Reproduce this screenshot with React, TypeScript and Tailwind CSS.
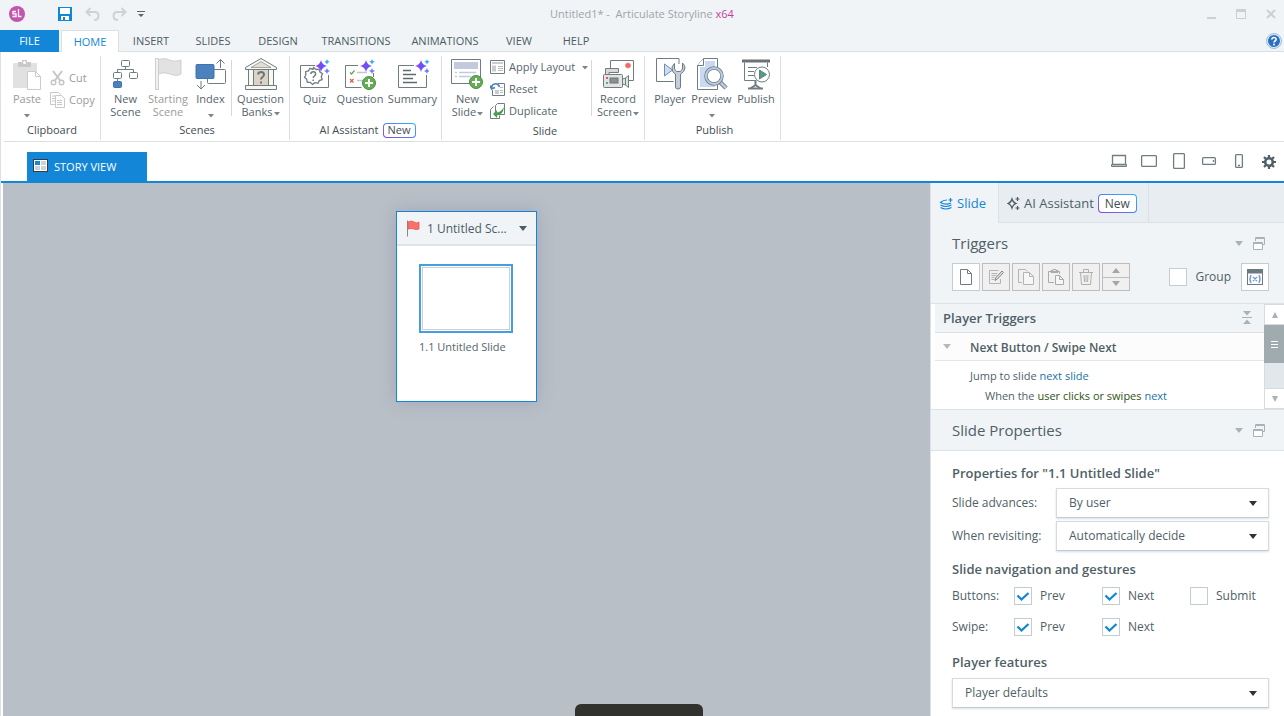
import type { ReactNode } from 'react';

const LINE = '#6f7c80';

function Caret({ className = 'text-[#7b868a]' }: { className?: string }) {
  return (
    <svg width="6" height="4" viewBox="0 0 6 4" className={`inline-block shrink-0 ${className}`}>
      <path d="M0 0h6L3 3.5z" fill="currentColor" />
    </svg>
  );
}

function Sparkles({ x, y }: { x: number; y: number }) {
  return (
    <g transform={`translate(${x} ${y})`}>
      <path d="M0-6Q1-1 6 0Q1 1 0 6Q-1 1-6 0Q-1-1 0-6z" fill="url(#spark)" />
      <path d="M6-7q.4 2.4 2.8 2.8Q6.400-3.800 6-1.400Q5.600-3.800 3.200-4.200Q5.600-4.600 6-7z" fill="#3aa5f5" />
      <path d="M6 2q.4 2.600 3 3Q6.400 5.400 6 8Q5.600 5.400 3 5Q5.600 4.600 6 2z" fill="#6a7bff" />
    </g>
  );
}

function Plus({ x, y }: { x: number; y: number }) {
  return (
    <g transform={`translate(${x} ${y})`}>
      <circle r="6.500" fill="#63ad52" stroke="#4b8f42" />
      <path d="M-4 0h8M0-4v8" stroke="#fff" strokeWidth="2" />
    </g>
  );
}

const icons: Record<string, ReactNode> = {
  paste: (
    <svg width="28" height="36" fill="none">
      <path d="M0 7h24v25H0z" fill="#e1e1e1" />
      <path d="M5 6h4V4h5v2h4v5H5z" fill="#c9c9c9" />
      <circle cx="11.500" cy="6.500" r="1.500" fill="#fff" />
      <path d="M14.500 15.500h8l5 5v13h-13z" fill="#fff" stroke="#cbcbcb" />
      <path d="M22.500 15.500v5h5" stroke="#cbcbcb" />
    </svg>
  ),
  newScene: (
    <svg width="27" height="36" fill="none" stroke={LINE}>
      <rect x="9.500" y="4.500" width="8" height="6" rx="1" />
      <rect x="1.500" y="16.500" width="8" height="6" rx="1" />
      <rect x="17.500" y="16.500" width="8" height="6" rx="1" />
      <path d="M13.500 10.500v3M5.500 16.500v-3h16v3M5.500 22.500v3" />
      <rect x="1.500" y="25.500" width="8" height="6" rx="1" fill="#4b82bd" stroke="#3f75ae" />
    </svg>
  ),
  startingScene: (
    <svg width="27" height="36" fill="none" stroke="#cfcfcf">
      <path d="M3.500 4c4-2 7-1.500 11 0s7 1.500 11.500 0v14c-4 2-7 1.500-11 0s-8-1.500-11.500 0z" fill="#e2e2e2" />
      <rect x=".5" y="2.500" width="3" height="31" fill="#f1f1f1" />
    </svg>
  ),
  index: (
    <svg width="32" height="36" fill="none" stroke={LINE}>
      <rect x="12.500" y="13.500" width="18" height="14" rx="1" />
      <rect x="1" y="8.500" width="18" height="14" rx="1" fill="#4b82bd" stroke="#3f75ae" />
      <path d="M25.500 12V3.500M21.500 7.500l4-4 4 4M6 25v8M2 29l4 4 4-4" />
    </svg>
  ),
  questionBanks: (
    <svg width="32" height="36" fill="none" stroke={LINE}>
      <rect x="8.500" y="14" width="15" height="15.500" fill="#dcd2c6" stroke="none" />
      <path d="M3.500 13.500h5v16h-5zM23.500 13.500h5v16h-5z" fill="#f8f8f2" />
      <path d="M.5 11.500L16 2.500l15.500 9v2H.5z" fill="#f8f8f2" />
      <path d="M6 11.500l10-6 10 6z" fill="#e3ddd2" strokeWidth=".6" />
      <path d="M.5 29.500h31v4H.5z" fill="#f8f8f2" />
      <path d="M13 18.500q.5-2.500 3-2.500 3 0 3 2.500 0 1.500-1.500 2.500-1.500 1-1.500 2.500M16 25.500v2" stroke="#66777d" strokeWidth="2" />
    </svg>
  ),
  quiz: (
    <svg width="32" height="36" fill="none" stroke={LINE}>
      <path d="M16 9.500H1.500v22h28V19" />
      <path d="M14.500 12.500l2.500 2 3-.3 1 2.800 2.500 1.700-1.200 2.800.8 3-2.800 1.100-1.300 2.700-3-.6-2.500 1.700-2.200-2.100-3 0-.6-3-2.200-2 1.400-2.600-.3-3 2.900-.8 1.500-2.600 2.900 1z" strokeWidth="1.300" transform="translate(0 -1)" />
      <path d="M11.800 18q.2-2.200 2.400-2.200 2.400 0 2.400 2.200 0 1.200-1.200 2t-1.200 2M14.200 23.500v1.600" strokeWidth="1.500" />
      <g stroke="none"><Sparkles x={22} y={10} /></g>
    </svg>
  ),
  question: (
    <svg width="34" height="36" fill="none" stroke={LINE}>
      <path d="M15 9.500H2.500v22h16M30.500 17v4" />
      <path d="M7 16.500l1.500 1.500 3-3.500" stroke="#58a84d" strokeWidth="1.200" />
      <path d="M7 23l3.500 3.500M10.500 23L7 26.500" stroke="#e5564c" strokeWidth="1.200" />
      <path d="M14 16.500h10M14 24.500h6" stroke="#bfc5d6" strokeWidth="1.500" />
      <g stroke="none"><Sparkles x={23} y={10} /></g>
      <Plus x={26} y={27} />
    </svg>
  ),
  summary: (
    <svg width="32" height="36" fill="none" stroke={LINE}>
      <path d="M17 9.500H1.500v22h28V19" />
      <path d="M6 14.500h8M6 18.500h13M6 22.500h10M6 26.500h14" strokeWidth="1.500" stroke="#5d6c71" />
      <g stroke="none"><Sparkles x={24} y={10} /></g>
    </svg>
  ),
  newSlide: (
    <svg width="33" height="36" fill="none" stroke={LINE}>
      <path d="M.5 3.500h29v24H.5z" />
      <path d="M3 6h24v7H3z" fill="#c3cade" stroke="none" />
      <path d="M4 16.500h2M8 16.500h17M4 20.500h2M8 20.500h12" stroke="#c3cade" strokeWidth="1.500" />
      <Plus x={25} y={26} />
    </svg>
  ),
  record: (
    <svg width="33" height="36" fill="none" stroke={LINE}>
      <path d="M8.500 12V4.500h23v20h-5" />
      <circle cx="26" cy="9.500" r="2.500" fill="#f4675f" stroke="#f08c80" />
      <path d="M3.500 18v-5.500h13v4H7V18" fill="#d8d8d8" />
      <rect x="1.500" y="18.500" width="19" height="13" rx="1" fill="#e3e3e3" />
      <rect x="8" y="22" width="8" height="5" fill="#87918f" stroke="#6c7775" />
      <path d="M20.500 23l3-1v7l-3-1zM23.500 22l3-2.500v12l-3-2.500" fill="#e3e3e3" />
      <path d="M4 22h2" stroke="#e5564c" strokeWidth="2" />
      <path d="M4 27h2" stroke="#42b883" strokeWidth="2" />
    </svg>
  ),
  player: (
    <svg width="31" height="36" fill="none" stroke={LINE}>
      <path d="M24 8V2.500H1.500v23h17" />
      <path d="M9.500 8v12l8-6z" fill="#cfdcf0" stroke="#6c8fb8" />
      <path d="M19.500 7.500q-4 3-2 7.500 1 2 3 3v13q0 2 2.500 2t2.500-2V18q4-2 4.500-6 0-3-2.500-5v6l-2 2.500h-4l-2-2.500z" fill="#c6cede" />
    </svg>
  ),
  preview: (
    <svg width="32" height="36" fill="none" stroke={LINE}>
      <path d="M7.500 2.500h14v31H1.500v-24z" fill="#fff" />
      <path d="M9 5h10v26H4V11h5z" fill="#c9d9f1" stroke="none" />
      <path d="M7.500 2.500v7h-6" fill="#fff" />
      <path d="M24 26l6 6" strokeWidth="4.500" />
      <path d="M24 26l6 6" stroke="#b9cae4" strokeWidth="2.500" />
      <circle cx="18" cy="20" r="8" fill="#fff" strokeWidth="3.500" />
      <circle cx="18" cy="20" r="8" stroke="#b9cde8" strokeWidth="2" />
    </svg>
  ),
  publish: (
    <svg width="32" height="36" fill="none" stroke={LINE}>
      <path d="M2 5h28" stroke="#6a7377" strokeWidth="3" />
      <path d="M4.500 6.500v18h11M27.500 6.500V11M8 11.500h9M8 15.500h6M8 19.500h6" />
      <path d="M15.500 24v6M15.500 29l-5 3.500M15.500 29l5 3.500" strokeWidth="2" />
      <path d="M8 32.500h15" strokeWidth="2" />
      <circle cx="22" cy="18.500" r="7.500" fill="#fff" />
      <path d="M19.500 14v9l7-4.500z" fill="#4aa08a" />
    </svg>
  ),
};

interface RibbonButtonProps {
  icon: string;
  lines: string[];
  width: string;
  caret?: 'inline' | 'below';
  disabled?: boolean;
}

function RibbonButton({ icon, lines, width, caret, disabled }: RibbonButtonProps) {
  return (
    <button
      disabled={disabled}
      className={`flex flex-col items-center whitespace-nowrap leading-[13px] ${width} ${disabled ? 'text-[#9b9b9b]' : 'text-[#56656b]'}`}
    >
      {icons[icon]}
      {lines.map((line, i) => (
        <span key={line} className="flex items-center gap-px">
          {line}
          {caret === 'inline' && i === lines.length - 1 && <Caret className="mt-1 text-[#7b868a]" />}
        </span>
      ))}
      {caret === 'below' && (
        <span className="flex h-4 items-center pt-1.5">
          <Caret />
        </span>
      )}
    </button>
  );
}

function RibbonGroup({ label, children, className = '' }: { label: ReactNode; children: ReactNode; className?: string }) {
  return (
    <section className={`flex flex-col justify-between border-r border-[#d9dfe2] ${className}`}>
      <div className="flex items-start">{children}</div>
      <div className="flex h-5 items-center justify-center gap-1 text-[#3f4d54]">{label}</div>
    </section>
  );
}

function RibbonDivider() {
  return <div className="mt-1 h-14 w-px shrink-0 bg-[#d3d9dc]" />;
}

function NewBadge({ className }: { className: string }) {
  return (
    <span className="inline-flex rounded bg-linear-to-tr from-[#9333ea] via-[#4f7df5] to-[#22b8f0] p-px">
      <span className={`flex items-center rounded-[3px] bg-white text-[#3f4d54] ${className}`}>New</span>
    </span>
  );
}

function SmallAction({ label, disabled, children }: { label: string; disabled?: boolean; children: ReactNode }) {
  return (
    <button disabled={disabled} className={`flex h-[22px] items-center gap-1 whitespace-nowrap ${disabled ? 'text-[#9b9b9b]' : 'text-[#56656b]'}`}>
      {children}
      {label}
    </button>
  );
}

const tabs = [
  { name: 'INSERT', width: 'w-16' },
  { name: 'SLIDES', width: 'w-[60px]' },
  { name: 'DESIGN', width: 'w-[70px]' },
  { name: 'TRANSITIONS', width: 'w-[86px]' },
  { name: 'ANIMATIONS', width: 'w-[92px]' },
  { name: 'VIEW', width: 'w-14' },
  { name: 'HELP', width: 'w-[58px]' },
];

function TitleBar() {
  return (
    <header className="grid h-[30px] grid-cols-[1fr_auto_1fr] items-center pb-0.5">
      <div className="flex items-center pl-2">
        <svg width="18" height="18" viewBox="0 0 18 18" fill="none">
          <circle cx="9" cy="9" r="8" fill="#c454ae" />
          <path d="M8 6.500H5v2.300h3v2.700H4.500M10.500 4v7.500h3" stroke="#fff" strokeWidth="1.300" />
        </svg>
        <button aria-label="Save" className="ml-8">
          <svg width="14" height="14">
            <path d="M0 0h14v14H0z" fill="#1486d8" />
            <path d="M2 1h10v6H2zM3 9h8v4H3z" fill="#fff" />
            <path d="M5 10h2v3H5z" fill="#1486d8" />
          </svg>
        </button>
        <button aria-label="Undo" className="ml-[13px]">
          <svg width="15" height="14" fill="none" stroke="#cfd2d4" strokeWidth="2">
            <path d="M5.500 1L1.500 5l4 4M2 5h7.500q4 0 4 4t-4.500 4" />
          </svg>
        </button>
        <button aria-label="Redo" className="ml-3">
          <svg width="15" height="14" fill="none" stroke="#cfd2d4" strokeWidth="2">
            <path d="M9.500 1l4 4-4 4M13 5H5.500q-4 0-4 4T6 13" />
          </svg>
        </button>
        <button aria-label="Customize toolbar" className="ml-[10px] text-[#5f6468]">
          <svg width="8" height="6" fill="currentColor">
            <path d="M0 0h8v1H0zM1 3h6L4 6z" />
          </svg>
        </button>
      </div>
      <h1 className="whitespace-pre text-[#a0a4a7]">
        Untitled1* -  Articulate Storyline <span className="text-[#c63d9c]">x64</span>
      </h1>
      <div className="flex items-center justify-end gap-5 pr-2">
        <button aria-label="Minimize">
          <svg width="9" height="10"><path d="M0 8h9v2H0z" fill="#cfcfcf" /></svg>
        </button>
        <button aria-label="Maximize">
          <svg width="10" height="10"><path d="M0 0h10v10H0zM1 3v6h8V3z" fill="#cfcfcf" fillRule="evenodd" /></svg>
        </button>
        <button aria-label="Close">
          <svg width="10" height="10" stroke="#cfcfcf" strokeWidth="2"><path d="M1 1l8 8M9 1L1 9" /></svg>
        </button>
      </div>
    </header>
  );
}

function MenuTabs() {
  return (
    <nav className="flex h-[22px] border-b border-[#dbe0e3] leading-[22px] text-[#4c5c64]">
      <button className="mr-0.5 -mb-px w-[59px] bg-[#1486d8] text-white">FILE</button>
      <button className="-mb-px w-[58px] border border-b-0 border-[#dbe0e3] bg-white text-[#1486d8]">HOME</button>
      {tabs.map((tab) => (
        <button key={tab.name} className={`-mb-px ${tab.width}`}>{tab.name}</button>
      ))}
      <button aria-label="Help" className="mr-0.5 ml-auto">
        <svg width="16" height="16" fill="none">
          <circle cx="8" cy="8" r="7.500" fill="#dce9f6" stroke="#9dbde0" />
          <circle cx="8" cy="8" r="6" fill="#2b6fc0" />
          <path d="M5.800 6.500q.2-2 2.200-2t2.200 1.800q0 1-1.100 1.700T8 9.500M8 10.500v2" stroke="#fff" strokeWidth="1.600" />
        </svg>
      </button>
    </nav>
  );
}

function Ribbon() {
  return (
    <div className="ml-[3px] flex h-[90px] border-b border-[#dbe0e3] pt-1 pb-px">
      <RibbonGroup label="Clipboard" className="w-[97px]">
        <RibbonButton icon="paste" lines={['Paste']} width="w-[46px]" caret="below" disabled />
        <div className="pt-[11px]">
          <SmallAction label="Cut" disabled>
            <svg width="15" height="16" fill="none" stroke="#c6c6c6" strokeWidth="1.500">
              <path d="M3 1l7.500 10M12 1L4.500 11" strokeWidth="2" />
              <circle cx="3.500" cy="12.500" r="2.300" />
              <circle cx="11.500" cy="12.500" r="2.300" />
            </svg>
          </SmallAction>
          <SmallAction label="Copy" disabled>
            <svg width="15" height="16" fill="none" stroke="#c8c8c8">
              <path d="M.5.5h8l2 2v10H.5zM2 4h4M2 6.500h3M2 9h3" />
              <path d="M5.500 3.500h6l3 3v9h-9z" fill="#fff" />
              <path d="M7 8.500h5M7 10.500h5M7 12.500h5" />
            </svg>
          </SmallAction>
        </div>
      </RibbonGroup>

      <RibbonGroup label="Scenes" className="w-[189px] pl-1">
        <RibbonButton icon="newScene" lines={['New', 'Scene']} width="w-[41px]" />
        <RibbonButton icon="startingScene" lines={['Starting', 'Scene']} width="w-[44px]" disabled />
        <RibbonButton icon="index" lines={['Index']} width="w-[41px]" caret="below" />
        <RibbonDivider />
        <RibbonButton icon="questionBanks" lines={['Question', 'Banks']} width="w-[57px]" caret="inline" />
      </RibbonGroup>

      <RibbonGroup
        label={<>AI Assistant <NewBadge className="h-[13px] px-1" /></>}
        className="w-[152px] pl-1"
      >
        <RibbonButton icon="quiz" lines={['Quiz']} width="w-[41px]" />
        <RibbonButton icon="question" lines={['Question']} width="w-[50px]" />
        <RibbonButton icon="summary" lines={['Summary']} width="w-[55px]" />
      </RibbonGroup>

      <RibbonGroup label="Slide" className="w-[203px] pl-1">
        <RibbonButton icon="newSlide" lines={['New', 'Slide']} width="w-[43px]" caret="inline" />
        <div className="w-[102px] pl-px">
          <SmallAction label="Apply Layout">
            <svg width="15" height="14" fill="none" stroke={LINE}>
              <path d="M.5.5h14v13H.5z" />
              <path d="M2 2h11v2H2zM2 5.500h4v6H2z" fill="#c9cdd0" stroke="none" />
              <path d="M8 6.500h5M8 8.500h5M8 10.500h5" stroke="#b5bbbe" />
            </svg>
            <span className="order-last pl-[3px]"><Caret /></span>
          </SmallAction>
          <SmallAction label="Reset">
            <svg width="15" height="14" fill="none" stroke={LINE}>
              <path d="M8 1.500h6.500v12H2.500V8" />
              <path d="M5 8h4v4H5z" fill="#c9cdd0" stroke="none" />
              <path d="M10 5.500h3M10 8.500h3M10 10.500h3" stroke="#b5bbbe" />
              <path d="M9.500 5Q8 1 4.500 2T2 6.500M0 3.500l1.500 3.500L5 5.500" stroke="#4b82bd" strokeWidth="1.600" />
            </svg>
          </SmallAction>
          <SmallAction label="Duplicate">
            <svg width="15" height="16" fill="none" stroke={LINE}>
              <path d="M7.500.5h7v11h-9v-9zM3.500 3.500L.5 6.500v9h9v-3" />
              <path d="M14 4q-1 8-7 8.500v2.500L3 11l4-4v2.500Q11 9 14 4z" fill="#4a9b55" stroke="none" />
            </svg>
          </SmallAction>
        </div>
        <RibbonDivider />
        <RibbonButton icon="record" lines={['Record', 'Screen']} width="w-[52px]" caret="inline" />
      </RibbonGroup>

      <RibbonGroup label="Publish" className="w-[136px] pl-1">
        <RibbonButton icon="player" lines={['Player']} width="w-[42px]" />
        <RibbonButton icon="preview" lines={['Preview']} width="w-[41px]" caret="below" />
        <RibbonButton icon="publish" lines={['Publish']} width="w-[48px]" />
      </RibbonGroup>
    </div>
  );
}

function DeviceButton({ label, children }: { label: string; children: ReactNode }) {
  return (
    <button aria-label={label} className="flex w-[30px] justify-center">
      <svg width="16" height="16" fill="none" stroke="#6f7c80" strokeWidth="1.300">{children}</svg>
    </button>
  );
}

function ViewBar() {
  return (
    <div className="flex h-[41px] items-end border-b-2 border-[#1486d8] pl-[26px]">
      <button className="flex h-[29px] w-[120px] items-center gap-1.5 bg-[#1486d8] pt-px pl-1.5 text-white">
        <svg width="15" height="13" className="mb-1">
          <path d="M0 0h15v13H0z" fill="#333c44" />
          <path d="M1 1h13v11H1z" fill="#fff" />
          <path d="M2 2h5v4H2z" fill="#1486d8" />
          <path d="M8 2h5v4H8zM2 7h5v4H2zM8 7h5v4H8z" fill="#cfd2d4" />
        </svg>
        STORY VIEW
      </button>
      <div className="ml-auto flex h-full items-center pb-px">
        <DeviceButton label="Desktop">
          <path d="M1.500 2.500h13v9h-13z" />
          <path d="M.5 11.500h15v2H.5z" fill="#b9c0c3" strokeWidth="1" />
        </DeviceButton>
        <DeviceButton label="Tablet landscape">
          <rect x=".6" y="2.600" width="14.800" height="10.800" rx="1" />
        </DeviceButton>
        <DeviceButton label="Tablet portrait">
          <rect x="2.600" y=".6" width="10.800" height="14.800" rx="1" />
        </DeviceButton>
        <DeviceButton label="Phone landscape">
          <rect x="1.600" y="4.600" width="12.800" height="6.800" rx="1" />
          <path d="M12.500 7v2" />
        </DeviceButton>
        <DeviceButton label="Phone portrait">
          <rect x="4.600" y="1.600" width="6.800" height="12.800" rx="1" />
          <path d="M7 12.500h2" />
        </DeviceButton>
        <button aria-label="Player settings" className="flex w-[30px] justify-center pt-0.5">
          <svg width="14" height="14" fill="none" stroke="#4f6067">
            <circle cx="7" cy="7" r="3.800" strokeWidth="2.600" />
            <path d="M7 0v3M7 11v3M0 7h3M11 7h3M2 2l2.200 2.200M9.800 9.800L12 12M12 2L9.800 4.200M4.200 9.800L2 12" strokeWidth="2.200" />
          </svg>
        </button>
      </div>
    </div>
  );
}

function StoryCanvas() {
  return (
    <main className="relative ml-0.5 flex-1 overflow-hidden bg-[#b8bfc7]">
      <div className="absolute top-[28px] left-[393px] h-[191px] w-[141px] border border-[#1486d8] bg-white shadow-[0_0_16px_rgba(100,105,140,0.28)]">
        <div className="flex h-[34px] items-center border-b-2 border-[#e0e4e7] bg-[#f0f4f7] px-[9px] text-xs text-[#4c5c64]">
          <svg width="14" height="17" fill="none">
            <path d="M1.500.5v16" stroke="#7d8a90" />
            <path d="M2 2q3-2 6 0t5 0v7q-3 1-5 0T2 9z" fill="#fa7169" stroke="#e9554c" strokeWidth=".8" />
          </svg>
          <span className="flex-1 truncate pt-px pl-[7px]">1 Untitled Sc...</span>
          <button aria-label="Scene menu">
            <svg width="8" height="5"><path d="M0 0h8L4 5z" fill="#4c5c64" /></svg>
          </button>
        </div>
        <div className="pt-[18px] pr-[23px] pl-[22px]">
          <div className="h-[69px] border-2 border-[#43a0e0] p-px">
            <div className="h-full border border-[#cfcfcf]" />
          </div>
          <div className="pt-1.5 leading-4 whitespace-nowrap text-[#56656b]">1.1 Untitled Slide</div>
        </div>
      </div>
      <div className="absolute bottom-0 left-[572px] h-3 w-32 rounded-t-md bg-[#31312e]" />
    </main>
  );
}

function PanelControls() {
  return (
    <div className="flex items-center gap-2.5">
      <button aria-label="Collapse">
        <svg width="8" height="5"><path d="M0 0h8L4 5z" fill="#a9b3b7" /></svg>
      </button>
      <button aria-label="Undock">
        <svg width="12" height="13" fill="none" stroke="#a9b3b7">
          <path d="M2.500 4v-3.500h9v7h-2M2 1.500h10" />
          <path d="M.5 5.500h9v7h-9zM0 6.500h10" fill="#fff" />
        </svg>
      </button>
    </div>
  );
}

function ToolButton({ label, enabled, children }: { label: string; enabled?: boolean; children: ReactNode }) {
  return (
    <button
      aria-label={label}
      className={`flex h-7 w-7 items-center justify-center border ${enabled ? 'border-[#c2ccd1] bg-white' : 'border-[#bdbdbd] bg-[#f0f0f0]'}`}
    >
      {children}
    </button>
  );
}

function Check({ id, label, checked = false, className = '' }: { id: string; label: string; checked?: boolean; className?: string }) {
  return (
    <div className={`flex items-center gap-2 ${className}`}>
      <span className="relative h-[18px] w-[18px]">
        <input id={id} type="checkbox" defaultChecked={checked} className="peer block h-full w-full appearance-none border border-[#c2ccd6] bg-white" />
        <svg className="pointer-events-none absolute inset-0 hidden peer-checked:block" width="18" height="18" fill="none">
          <path d="M3.500 8.500L7.500 12.500L14.500 6" stroke="#1486d8" strokeWidth="2.300" />
        </svg>
      </span>
      <label htmlFor={id}>{label}</label>
    </div>
  );
}

function Dropdown({ id, value, className = '' }: { id: string; value: string; className?: string }) {
  return (
    <div className={`relative ${className}`}>
      <select id={id} aria-label={value} defaultValue={value} className="block h-[30px] w-full appearance-none border border-[#d5dce0] border-b-[#bfcdd2] bg-white px-3 shadow-[0_1px_2px_rgba(0,40,60,0.15)]">
        <option>{value}</option>
      </select>
      <svg className="pointer-events-none absolute top-[13px] right-3" width="8" height="5"><path d="M0 0h8L4 5z" fill="#333" /></svg>
    </div>
  );
}

function TriggersPanel() {
  return (
    <>
      <div className="border-b border-[#dbe1e5] pt-2.5 pr-[15px] pb-3 pl-[21px]">
        <div className="flex items-center justify-between pr-1">
          <h2 className="text-[15px] leading-5">Triggers</h2>
          <PanelControls />
        </div>
        <div className="flex items-center gap-0.5 pt-2.5">
          <ToolButton label="New trigger" enabled>
            <svg width="14" height="17" fill="none" stroke={LINE}><path d="M1.500.5h7l4 4v11h-11zM8.500.5v4h4" /></svg>
          </ToolButton>
          <ToolButton label="Edit trigger">
            <svg width="15" height="15" fill="none" stroke="#b4b4b4">
              <path d="M9.500.5h-9v13h11V9M2.500 3.500h6M2.500 5.500h5M2.500 7.500h3M2.500 9.500h3" />
              <path d="M6 10.500l1-3L13 1l1.500 1.500L8.500 9z" fill="#ddd" stroke="#888" />
            </svg>
          </ToolButton>
          <ToolButton label="Copy trigger">
            <svg width="16" height="16" fill="none" stroke="#b4b4b4">
              <path d="M4 13.500H.5V.5h7l2 2" />
              <path d="M5.500 3.500h6l4 4v8h-10zM11.500 3.500v4h4" fill="#f7f7f7" />
            </svg>
          </ToolButton>
          <ToolButton label="Paste trigger">
            <svg width="16" height="16" fill="none" stroke="#aaa">
              <path d="M6 13.500H.5v-11h11V5M3 3.500V1.500h2V.5h3v1h2v2z" />
              <path d="M7.500 6.500h4l4 4v5h-8zM11.500 6.500v4h4" fill="#f7f7f7" />
            </svg>
          </ToolButton>
          <ToolButton label="Delete trigger">
            <svg width="14" height="16" fill="none" stroke="#b0b0b0">
              <path d="M0 3.500h14M4.500 3.500v-3h5v3M1.500 3.500l1 12h9l1-12M5 6l.5 7M7 6v7M9 6l-.5 7" />
            </svg>
          </ToolButton>
          <div className="flex h-7 w-7 flex-col border border-[#bdbdbd] bg-[#f0f0f0]">
            <button aria-label="Move up" className="flex flex-1 items-center justify-center border-b border-[#bdbdbd]">
              <svg width="8" height="5"><path d="M0 5h8L4 0z" fill="#a5a5a5" /></svg>
            </button>
            <button aria-label="Move down" className="flex flex-1 items-center justify-center">
              <svg width="8" height="5"><path d="M0 0h8L4 5z" fill="#a5a5a5" /></svg>
            </button>
          </div>
          <Check id="group" label="Group" className="mr-2 ml-auto" />
          <ToolButton label="Variables" enabled>
            <svg width="16" height="16" fill="none">
              <path d="M0 0h16v16H0z" fill="#6c7a80" />
              <path d="M1 4.500h14V15H1z" fill="#fff" />
              <path d="M4 6q-2 4 0 8M12 6q2 4 0 8M6 8l4 4M10 8l-4 4" stroke="#6f9bd8" strokeWidth="1.400" />
            </svg>
          </ToolButton>
        </div>
      </div>

      <div className="flex border-b border-[#dbe1e5] bg-white">
        <div className="flex-1 pl-1">
          <div className="flex h-[29px] items-center justify-between border-b border-[#dbe1e5] bg-[#f0f4f7] pr-3 pl-2">
            <h3 className="pt-0.5 text-[13px] font-semibold">Player Triggers</h3>
            <button aria-label="Collapse all">
              <svg width="10" height="14" fill="#a9b3b7"><path d="M1 0h8L5 4.500zM0 6h10v1H0zM1 13h8L5 8.500z" /></svg>
            </button>
          </div>
          <div className="flex h-7 items-center border-b border-[#e2e6e9] bg-[#fcfcfc] pl-2 font-semibold">
            <svg width="8" height="5"><path d="M0 0h8L4 5z" fill="#b3babd" /></svg>
            <span className="pt-0.5 pl-[19px] text-xs">Next Button / Swipe Next</span>
          </div>
          <div className="pt-[5px] pb-[3px] pl-[35px] text-[11px] leading-5">
            <p>Jump to slide <a href="#next" className="text-[#1a73a5]">next slide</a></p>
            <p className="pl-[15px]">
              When the <a href="#event" className="text-[#2f5410]">user clicks or swipes</a> <a href="#target" className="text-[#1a73a5]">next</a>
            </p>
          </div>
        </div>
        <div className="flex w-5 flex-col border-l border-[#d5dbdf] bg-[#e1e7eb]">
          <button aria-label="Scroll up" className="flex h-[21px] items-center justify-center border-y border-[#d5dbdf] bg-white">
            <svg width="6" height="6"><path d="M0 6h6L3 0z" fill="#a9b3b7" /></svg>
          </button>
          <div className="-ml-px flex h-[38px] flex-col items-center justify-center gap-0.5 bg-[#a0abb0]">
            <div className="h-px w-[7px] bg-white" />
            <div className="h-px w-[7px] bg-white" />
            <div className="h-px w-[7px] bg-white" />
          </div>
          <button aria-label="Scroll down" className="mt-auto flex h-[21px] items-center justify-center border-y border-[#d5dbdf] bg-white">
            <svg width="6" height="6"><path d="M0 0h6L3 6z" fill="#a9b3b7" /></svg>
          </button>
        </div>
      </div>
    </>
  );
}

function PropertiesPanel() {
  return (
    <>
      <div className="flex h-[41px] items-center justify-between border-b border-[#dbe1e5] pr-[19px] pl-[21px]">
        <h2 className="text-[15px]">Slide Properties</h2>
        <PanelControls />
      </div>
      <div className="flex-1 bg-white pt-3 pr-[15px] pl-[21px]">
        <h3 className="text-[13px] leading-5 font-semibold">Properties for "1.1 Untitled Slide"</h3>
        <div className="grid grid-cols-[104px_1fr] items-center gap-y-[3px] pt-[5px]">
          <label htmlFor="advances">Slide advances:</label>
          <Dropdown id="advances" value="By user" />
          <label htmlFor="revisiting">When revisiting:</label>
          <Dropdown id="revisiting" value="Automatically decide" />
        </div>
        <h3 className="pt-2 text-[13px] leading-5 font-semibold">Slide navigation and gestures</h3>
        <div className="grid grid-cols-[62px_88px_88px_1fr] items-center gap-y-[13px] pt-2 leading-[18px]">
          <span>Buttons:</span>
          <Check id="btn-prev" label="Prev" checked />
          <Check id="btn-next" label="Next" checked />
          <Check id="btn-submit" label="Submit" />
          <span>Swipe:</span>
          <Check id="swipe-prev" label="Prev" checked />
          <Check id="swipe-next" label="Next" checked />
        </div>
        <h3 className="pt-4 text-[13px] leading-5 font-semibold">Player features</h3>
        <Dropdown id="features" value="Player defaults" className="mt-1.5" />
      </div>
    </>
  );
}

function SidePanel() {
  return (
    <aside className="flex w-[354px] shrink-0 flex-col border-l border-[#dbe1e5] bg-[#f0f4f7] text-xs text-[#4f5f66]">
      <div className="flex h-10 bg-[#e7edf0] text-[13px]">
        <button className="flex w-[67px] items-center gap-1 bg-[#f0f4f7] pt-px pl-2 text-[#1486d8]">
          <svg width="14" height="14" fill="none" stroke="#1486d8" strokeWidth="1.200">
            <path d="M8 3Q4 3 1.500 5.500 6.500 8.500 12 6M1.500 8q5 3 11 0M1.500 10.500q5 3 11 0M11.500 1v4M9.500 3h4" />
          </svg>
          Slide
        </button>
        <button className="flex w-[151px] items-center gap-1 border-x border-b border-[#dbe1e5] pt-0.5 pl-2 whitespace-nowrap">
          <svg width="13" height="13" fill="none" stroke="#4c5c64" strokeWidth="1.200">
            <path d="M5 2q1 3.500 4 4.500-3 1-4 4.500-1-3.500-4-4.500 3-1 4-4.500zM10.500 0v4M8.500 2h4M10.500 9v4M8.500 11h4" />
          </svg>
          AI Assistant
          <NewBadge className="h-[17px] px-1.5 text-xs" />
        </button>
        <div className="flex-1 border-b border-[#dbe1e5]" />
      </div>
      <TriggersPanel />
      <PropertiesPanel />
    </aside>
  );
}

export default function App() {
  return (
    <div className="flex h-screen flex-col overflow-hidden bg-[#f0f4f7] font-['Open_Sans','Noto_Sans',sans-serif] text-[11px]">
      <svg width="0" height="0" className="absolute">
        <linearGradient id="spark" x1="0" x2="1">
          <stop offset="0" stopColor="#9a3cf5" />
          <stop offset="1" stopColor="#4b5dfa" />
        </linearGradient>
      </svg>
      <TitleBar />
      <MenuTabs />
      <div className="flex min-h-0 flex-1 flex-col border-l border-[#dbe1e5] bg-white">
        <Ribbon />
        <ViewBar />
        <div className="flex min-h-0 flex-1">
          <StoryCanvas />
          <SidePanel />
        </div>
      </div>
    </div>
  );
}
